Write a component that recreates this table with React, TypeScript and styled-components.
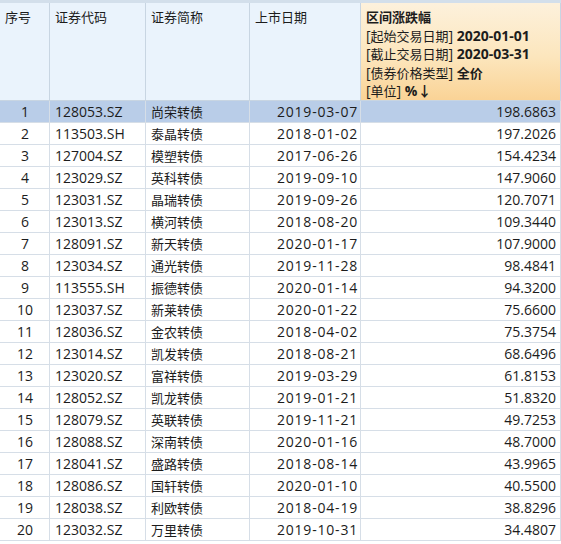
import React from "react";
import styled, { createGlobalStyle } from "styled-components";

const Global = createGlobalStyle`
  html, body { margin: 0; padding: 0; background: #ffffff; }
  body { font-family: "Open Sans", "Noto Sans CJK SC", sans-serif; }
`;

const Table = styled.div`
  display: grid;
  grid-template-columns: 50px 96px 104px 111px 1fr;
  width: 561px;
  border-top: 3px solid #d3dfeb;
  font-size: 14px;
  color: #1c1c1c;
`;

const HeadCell = styled.div<{ $accent?: boolean }>`
  height: 98px;
  box-sizing: border-box;
  padding: 5px 5px;
  border-right: 1px solid #c8d5e2;
  border-bottom: 1px solid #c8d5e2;
  background: ${(p) =>
    p.$accent
      ? "linear-gradient(180deg, #fdf1dc 0%, #fce6bd 55%, #fad396 100%)"
      : "#eaf3fc"};
  line-height: 18.5px;
  white-space: nowrap;
`;

const Cjk = styled.span<{ $bold?: boolean }>`
  font-family: "Noto Sans CJK SC", sans-serif;
  font-size: 13px;
  font-weight: ${(p) => (p.$bold ? 700 : 400)};
`;

const Bold = styled.span`
  font-weight: 700;
`;

const Cell = styled.div<{
  $align: "left" | "center" | "right";
  $sel?: boolean;
  $spaced?: boolean;
}>`
  height: 22px;
  box-sizing: border-box;
  line-height: 21px;
  padding: ${(p) => (p.$spaced ? "0 2px 0 5px" : "0 4px 0 5px")};
  letter-spacing: ${(p) => (p.$spaced ? "0.8px" : "0")};
  text-align: ${(p) => p.$align};
  border-right: 1px solid #d6dee7;
  border-bottom: 1px solid #d6dee7;
  background: ${(p) => (p.$sel ? "#b9cde8" : "#ffffff")};
  white-space: nowrap;
  overflow: hidden;
`;

const rows: [string, string, string, string][] = [
  ["128053.SZ", "尚荣转债", "2019-03-07", "198.6863"],
  ["113503.SH", "泰晶转债", "2018-01-02", "197.2026"],
  ["127004.SZ", "模塑转债", "2017-06-26", "154.4234"],
  ["123029.SZ", "英科转债", "2019-09-10", "147.9060"],
  ["123031.SZ", "晶瑞转债", "2019-09-26", "120.7071"],
  ["123013.SZ", "横河转债", "2018-08-20", "109.3440"],
  ["128091.SZ", "新天转债", "2020-01-17", "107.9000"],
  ["123034.SZ", "通光转债", "2019-11-28", "98.4841"],
  ["113555.SH", "振德转债", "2020-01-14", "94.3200"],
  ["123037.SZ", "新莱转债", "2020-01-22", "75.6600"],
  ["128036.SZ", "金农转债", "2018-04-02", "75.3754"],
  ["123014.SZ", "凯发转债", "2018-08-21", "68.6496"],
  ["123020.SZ", "富祥转债", "2019-03-29", "61.8153"],
  ["128052.SZ", "凯龙转债", "2019-01-21", "51.8320"],
  ["128079.SZ", "英联转债", "2019-11-21", "49.7253"],
  ["128088.SZ", "深南转债", "2020-01-16", "48.7000"],
  ["128041.SZ", "盛路转债", "2018-08-14", "43.9965"],
  ["128086.SZ", "国轩转债", "2020-01-10", "40.5500"],
  ["128038.SZ", "利欧转债", "2018-04-19", "38.8296"],
  ["123032.SZ", "万里转债", "2019-10-31", "34.4807"],
];

export default function App() {
  return (
    <>
      <Global />
      <Table>
        <HeadCell><Cjk>序号</Cjk></HeadCell>
        <HeadCell><Cjk>证券代码</Cjk></HeadCell>
        <HeadCell><Cjk>证券简称</Cjk></HeadCell>
        <HeadCell><Cjk>上市日期</Cjk></HeadCell>
        <HeadCell $accent>
          <Cjk $bold>区间涨跌幅</Cjk>
          <br />
          [<Cjk>起始交易日期</Cjk>] <Bold>2020-01-01</Bold>
          <br />
          [<Cjk>截止交易日期</Cjk>] <Bold>2020-03-31</Bold>
          <br />
          [<Cjk>债券价格类型</Cjk>] <Cjk $bold>全价</Cjk>
          <br />
          [<Cjk>单位</Cjk>] <Bold>%↓</Bold>
        </HeadCell>
        {rows.map((r, i) => {
          const sel = i === 0;
          return (
            <React.Fragment key={r[0]}>
              <Cell $align="center" $sel={sel}>{i + 1}</Cell>
              <Cell $align="left" $sel={sel}>{r[0]}</Cell>
              <Cell $align="left" $sel={sel}><Cjk>{r[1]}</Cjk></Cell>
              <Cell $align="right" $sel={sel} $spaced>{r[2]}</Cell>
              <Cell $align="right" $sel={sel}>{r[3]}</Cell>
            </React.Fragment>
          );
        })}
      </Table>
    </>
  );
}
